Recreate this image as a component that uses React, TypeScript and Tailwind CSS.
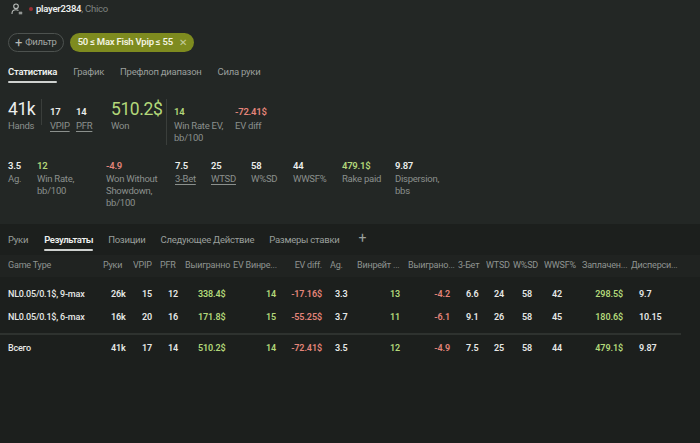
import React from "react";

const G = "text-[#b3d87a]";
const R = "text-[#e4857a]";
const W = "text-[#e6e8e6]";

type Col = { w: string; h: string; v: string };
const cols: Col[] = [
  { w: "w-[95px]", h: "text-left", v: "text-left font-medium tracking-[-0.2px]" },
  { w: "w-[30px]", h: "text-left", v: "text-left pl-[8px]" },
  { w: "w-[27px]", h: "text-left", v: "text-left pl-[9px]" },
  { w: "w-[25px]", h: "text-left", v: "text-left pl-[8px]" },
  { w: "w-[48px]", h: "text-left", v: "text-left pl-[13px]" },
  { w: "w-[55px]", h: "text-left", v: "text-right pr-[12px]" },
  { w: "w-[42px]", h: "text-right pr-[8px]", v: "text-right pr-[8px]" },
  { w: "w-[27px]", h: "text-left", v: "text-left pl-[5px]" },
  { w: "w-[51px]", h: "text-left", v: "text-right pr-[8px]" },
  { w: "w-[50px]", h: "text-left", v: "text-right pr-[8px]" },
  { w: "w-[28px]", h: "text-left", v: "text-left pl-[8px]" },
  { w: "w-[27px]", h: "text-left", v: "text-left pl-[8px]" },
  { w: "w-[31px]", h: "text-left", v: "text-left pl-[9px]" },
  { w: "w-[38px]", h: "text-left", v: "text-left pl-[8px]" },
  { w: "w-[49px]", h: "text-left", v: "text-right pr-[8px]" },
  { w: "w-[50px]", h: "text-left", v: "text-left pl-[8px]" },
];

const headers = [
  "Game Type",
  "Руки",
  "VPIP",
  "PFR",
  "Выигранно",
  "EV Винре...",
  "EV diff.",
  "Ag.",
  "Винрейт ...",
  "Выиграно...",
  "3-Бет",
  "WTSD",
  "W%SD",
  "WWSF%",
  "Заплачен...",
  "Дисперси...",
];

const colorMap = ["", "", "", "", G, G, R, "", G, R, "", "", "", "", G, ""];

const rows: string[][] = [
  ["NL0.05/0.1$, 9-max", "26k", "15", "12", "338.4$", "14", "-17.16$", "3.3", "13", "-4.2", "6.6", "24", "58", "42", "298.5$", "9.7"],
  ["NL0.05/0.1$, 6-max", "16k", "20", "16", "171.8$", "15", "-55.25$", "3.7", "11", "-6.1", "9.1", "26", "58", "45", "180.6$", "10.15"],
];
const total = ["Всего", "41k", "17", "14", "510.2$", "14", "-72.41$", "3.5", "12", "-4.9", "7.5", "25", "58", "44", "479.1$", "9.87"];

function Row({ data, cls }: { data: string[]; cls: string }) {
  return (
    <div className={"flex items-center pl-[8px] " + cls}>
      {data.map((d, i) => (
        <div key={i} className={cols[i].w + " " + cols[i].v + " shrink-0 whitespace-nowrap " + (colorMap[i] || W)}>
          {d}
        </div>
      ))}
    </div>
  );
}

function UserIcon() {
  return (
    <svg width="12" height="12" viewBox="0 0 12 12" fill="none" stroke="#b8bcb9" strokeWidth="1.1" strokeLinecap="round">
      <circle cx="5" cy="3.3" r="2.3" />
      <path d="M1 10.5c0-2.2 1.8-3.8 4-3.8 0.8 0 1.5 0.2 2.1 0.5" />
      <path d="M8.2 9.2h2.6M8.2 10.8h2.6" />
    </svg>
  );
}

function Stat({ value, label, vcls, w, under, big }: { value: string; label: string; vcls?: string; w: string; under?: boolean; big?: boolean }) {
  return (
    <div className={"flex flex-col shrink-0 " + w}>
      <div className="h-[19px] flex items-end">
        <span
          className={
            (big
              ? "text-[17.5px] leading-[18px] font-normal tracking-[-0.4px] "
              : "text-[9.5px] leading-[12px] font-semibold ") + (vcls || "text-[#eceeec]")
          }
        >
          {value}
        </span>
      </div>
      <div
        className={
          "mt-[2px] text-[9.5px] leading-[12px] text-[#8b908d] max-w-[54px] " +
          (under ? "underline underline-offset-2 decoration-[#8b908d]" : "")
        }
      >
        {label}
      </div>
    </div>
  );
}

function Stat2({ value, label, vcls, w, under }: { value: string; label: string; vcls?: string; w: string; under?: boolean }) {
  return (
    <div className={"flex flex-col shrink-0 " + w}>
      <div className={"text-[9.5px] leading-[13px] font-semibold " + (vcls || "text-[#eceeec]")}>{value}</div>
      <div
        className={
          "mt-[1px] text-[9.5px] leading-[12px] text-[#8b908d] max-w-[54px] " +
          (under ? "underline underline-offset-2 decoration-[#8b908d]" : "")
        }
      >
        {label}
      </div>
    </div>
  );
}

export default function App() {
  return (
    <div
      className="min-h-screen bg-[#1c1f1d] flex flex-col tracking-[-0.25px]"
      style={{ fontFamily: 'Roboto, "Noto Sans", sans-serif' }}
    >
      {/* Top section */}
      <div className="bg-[#232725] h-[224px] shrink-0 flex flex-col">
        {/* header */}
        <div className="h-[18px] flex items-center pl-[11px] text-[9.5px]">
          <UserIcon />
          <span className="ml-[6px] w-[4px] h-[4px] rounded-full bg-[#9c2f35]" />
          <span className="ml-[3px] font-semibold text-[#eceeec]">player2384</span>
          <span className="text-[#7f8481]">, Chico</span>
        </div>
        {/* pills */}
        <div className="mt-[15px] flex items-center gap-[6px] pl-[8px]">
          <div className="h-[19px] px-[6px] rounded-full border border-[#4d524f] flex items-center gap-[3px] text-[9.5px] text-[#a3a7a4]">
            <span className="text-[13px] leading-none text-[#b5b9b6] -mt-[1px]">+</span>
            <span>Фильтр</span>
          </div>
          <div className="h-[19px] pl-[8px] pr-[7px] rounded-full bg-[#7e8b1f] flex items-center gap-[6px] text-[9.5px] font-semibold text-[#f3f3e2]">
            <span>50 ≤ Max Fish Vpip ≤ 55</span>
            <span className="text-[#c5cb9c] font-normal text-[10px] leading-none">✕</span>
          </div>
        </div>
        {/* tabs */}
        <div className="mt-[12px] flex items-start gap-[16px] pl-[8px] text-[9.5px]">
          <div className="flex flex-col">
            <span className="leading-[16px] font-semibold text-[#eef0ee]">Статистика</span>
            <span className="mt-[1px] h-[2px] bg-[#cfd2d0] rounded" />
          </div>
          <span className="leading-[16px] text-[#9a9f9c]">График</span>
          <span className="leading-[16px] text-[#9a9f9c]">Префлоп диапазон</span>
          <span className="leading-[16px] text-[#9a9f9c]">Сила руки</span>
        </div>
        {/* stats row 1 */}
        <div className="mt-[16px] flex items-start pl-[8px]">
          <Stat value="41k" label="Hands" w="w-[33px]" big />
          <div className="w-px h-[26px] bg-[#3a3e3b] mr-[8px]" />
          <Stat value="17" label="VPIP" w="w-[26px]" under />
          <Stat value="14" label="PFR" w="w-[35px]" under />
          <Stat value="510.2$" label="Won" w="w-[55px]" big vcls="text-[#b3d87a]" />
          <div className="w-px h-[46px] bg-[#3a3e3b] mr-[7px]" />
          <Stat value="14" label="Win Rate EV, bb/100" w="w-[61px]" vcls="text-[#b3d87a]" />
          <Stat value="-72.41$" label="EV diff" w="w-[60px]" vcls="text-[#e4857a]" />
        </div>
        {/* stats row 2 */}
        <div className="mt-[14px] flex items-start pl-[8px]">
          <Stat2 value="3.5" label="Ag." w="w-[29px]" />
          <Stat2 value="12" label="Win Rate, bb/100" w="w-[69px]" vcls="text-[#b3d87a]" />
          <Stat2 value="-4.9" label="Won Without Showdown, bb/100" w="w-[69px]" vcls="text-[#e4857a]" />
          <Stat2 value="7.5" label="3-Bet" w="w-[36px]" under />
          <Stat2 value="25" label="WTSD" w="w-[40px]" under />
          <Stat2 value="58" label="W%SD" w="w-[42px]" />
          <Stat2 value="44" label="WWSF%" w="w-[49px]" />
          <Stat2 value="479.1$" label="Rake paid" w="w-[53px]" vcls="text-[#b3d87a]" />
          <Stat2 value="9.87" label="Dispersion, bbs" w="w-[60px]" />
        </div>
      </div>

      {/* table section */}
      <div className="flex flex-col">
        <div className="pt-[8px] flex items-start gap-[15px] pl-[8px] text-[9.5px] h-[31px]">
          <span className="leading-[15px] text-[#9a9f9c]">Руки</span>
          <div className="flex flex-col ml-[1px]">
            <span className="leading-[15px] font-semibold tracking-[-0.4px] text-[#eef0ee]">Результаты</span>
            <span className="mt-[2px] h-[2px] bg-[#cfd2d0] rounded" />
          </div>
          <span className="leading-[15px] text-[#9a9f9c]">Позиции</span>
          <span className="leading-[15px] text-[#9a9f9c]">Следующее Действие</span>
          <span className="leading-[15px] text-[#9a9f9c]">Размеры ставки</span>
          <span className="leading-[15px] text-[14px] text-[#9a9f9c] ml-[4px] -mt-[1px]">+</span>
        </div>
        {/* header */}
        <div className="flex items-center pl-[8px] h-[22px] bg-[#202321] text-[9px] tracking-[-0.2px] text-[#8f9491]">
          {headers.map((h, i) => (
            <div key={i} className={cols[i].w + " " + cols[i].h + " shrink-0 whitespace-nowrap overflow-hidden"}>
              {h}
            </div>
          ))}
        </div>
        <div className="h-[6px]" />
        {rows.map((r, i) => (
          <Row key={i} data={r} cls="h-[23px] text-[9px] font-semibold tracking-[-0.1px]" />
        ))}
        <div className="mt-[4px] h-[2px] w-[681px] bg-[#2e322f]" />
        <Row data={total} cls="h-[27px] text-[9px] font-semibold tracking-[-0.1px]" />
      </div>
    </div>
  );
}
